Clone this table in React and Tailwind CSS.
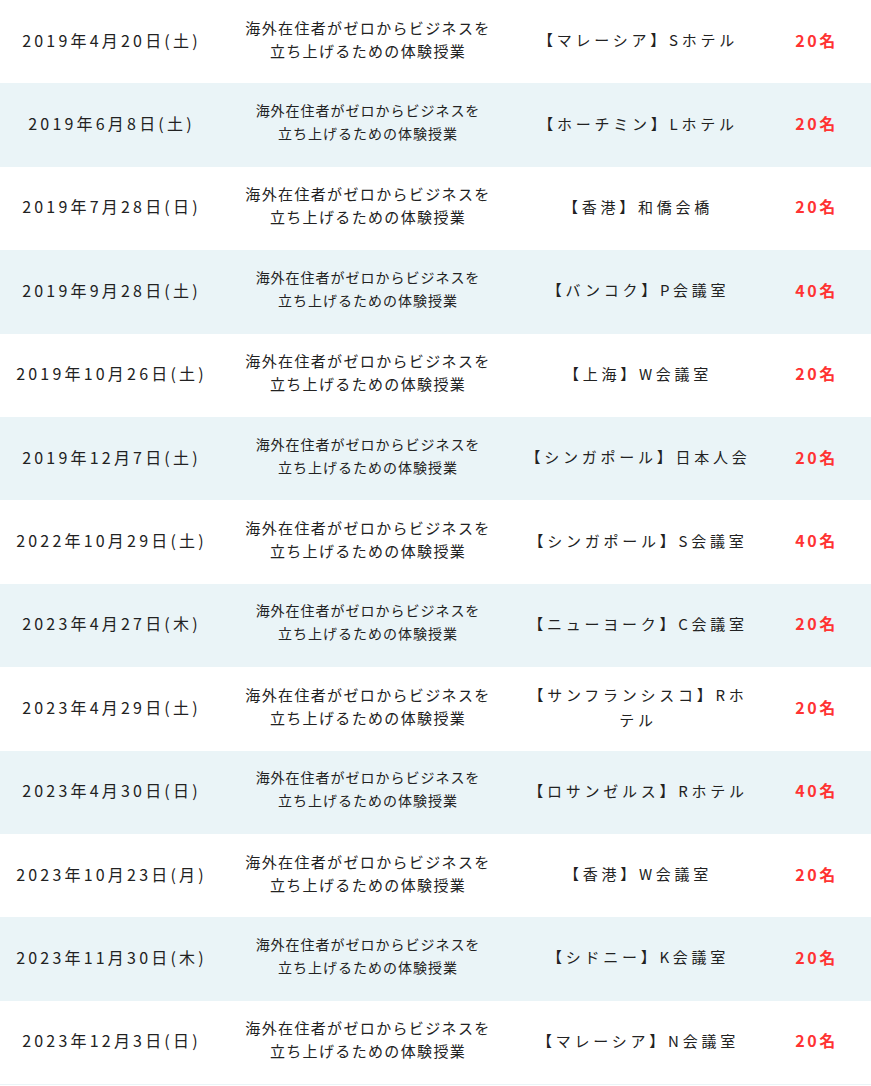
import React from 'react';

// seminar schedule rows
const rows = [
  { date: '2019年4月20日(土)', venue: '【マレーシア】Sホテル', count: '20名' },
  { date: '2019年6月8日(土)', venue: '【ホーチミン】Lホテル', count: '20名' },
  { date: '2019年7月28日(日)', venue: '【香港】和僑会橋', count: '20名' },
  { date: '2019年9月28日(土)', venue: '【バンコク】P会議室', count: '40名' },
  { date: '2019年10月26日(土)', venue: '【上海】W会議室', count: '20名' },
  { date: '2019年12月7日(土)', venue: '【シンガポール】日本人会', count: '20名' },
  { date: '2022年10月29日(土)', venue: '【シンガポール】S会議室', count: '40名' },
  { date: '2023年4月27日(木)', venue: '【ニューヨーク】C会議室', count: '20名' },
  { date: '2023年4月29日(土)', venue: '【サンフランシスコ】Rホテル', count: '20名' },
  { date: '2023年4月30日(日)', venue: '【ロサンゼルス】Rホテル', count: '40名' },
  { date: '2023年10月23日(月)', venue: '【香港】W会議室', count: '20名' },
  { date: '2023年11月30日(木)', venue: '【シドニー】K会議室', count: '20名' },
  { date: '2023年12月3日(日)', venue: '【マレーシア】N会議室', count: '20名' },
];

export default function App() {
  return (
    <div
      className="w-[871px] bg-white text-[#222] pb-[2px]"
      style={{ fontFamily: '"Noto Sans CJK JP", "Noto Sans", sans-serif' }}
    >
      {rows.map((row, i) => {
        const shaded = i % 2 === 1;
        return (
          <div
            key={i}
            className={`flex items-center h-[83.4px] pb-[4px] ${shaded ? 'bg-[#eaf4f7]' : 'bg-white'}`}
          >
            <div className="w-[220px] text-center text-[16px] tracking-[0.2em] pl-[3px]">
              {row.date}
            </div>
            <div
              className={`w-[296px] text-center leading-[23px] mb-[2px] ${
                shaded ? 'text-[14px] tracking-[0.07em]' : 'text-[15px] tracking-[0.09em]'
              }`}
            >
              海外在住者がゼロからビジネスを
              <br />
              立ち上げるための体験授業
            </div>
            <div className="w-[240px] text-center text-[15px] leading-[25px] tracking-[0.25em] pl-[4px]">
              {row.venue}
            </div>
            <div className="w-[115px] text-center text-[16px] font-bold tracking-[0.16em] text-[#ff3333] pl-[6px]">
              {row.count}
            </div>
          </div>
        );
      })}
      <div className="h-[1px] bg-[#eaf4f7]" />
    </div>
  );
}
